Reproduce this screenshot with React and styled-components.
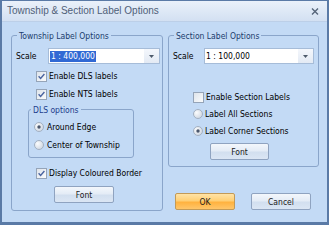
import React from 'react';
import styled, { createGlobalStyle } from 'styled-components';

const BODY_BG = '#c3daf5';

const GlobalStyle = createGlobalStyle`
  html, body { margin: 0; padding: 0; background: ${BODY_BG}; }
  body { font-family: "DejaVu Sans Condensed", "Liberation Sans", Arial, sans-serif; }
  * { box-sizing: border-box; }
`;

const Window = styled.div`
  width: 329px;
  height: 225px;
  border-style: solid;
  border-color: #5a7aa6;
  border-width: 1px 2px 3px 2px;
  background: ${BODY_BG};
  display: flex;
  flex-direction: column;
  font-size: 8.5px;
  color: #000;
  overflow: hidden;
`;

const TitleBar = styled.div`
  height: 21px;
  flex-shrink: 0;
  display: flex;
  align-items: center;
  justify-content: space-between;
  padding: 0 8px 0 5px;
  background: linear-gradient(#eaf1fa, #dce7f5 60%, #d3e0f2);
  border-bottom: 1px solid #bccfe8;
`;

const Title = styled.span`
  font-family: "Liberation Sans", Arial, sans-serif;
  font-size: 10px;
  color: #4f6078;
  line-height: 12px;
`;

const Body = styled.div`
  display: grid;
  grid-template-columns: 152px 151px;
  column-gap: 5px;
  padding: 0 8px 0 9px;
  align-items: start;
`;

const Column = styled.div`
  display: flex;
  flex-direction: column;
`;

const GroupBox = styled.div`
  border: 1px solid #8aa5ca;
  border-radius: 3px;
  display: flex;
  flex-direction: column;
  align-items: flex-start;
  margin: ${p => p.$mt || 0}px 0 0 ${p => p.$ml || 0}px;
  width: ${p => (p.$w ? `${p.$w}px` : 'auto')};
  padding-bottom: ${p => p.$pb}px;
`;

const Legend = styled.div`
  margin: -6px 0 0 ${p => p.$ml}px;
  padding: 0 2px;
  height: 12px;
  line-height: 12px;
  background: ${BODY_BG};
  color: ${p => p.$color || '#203c6c'};
`;

const ScaleRow = styled.div`
  display: flex;
  align-items: center;
  height: 16px;
  margin-top: 6px;
  padding-left: 4px;
`;

const ScaleLabel = styled.span`
  width: ${p => p.$w}px;
`;

const Combo = styled.div`
  width: ${p => p.$w}px;
  height: 16px;
  border: 1px solid #a6bcd8;
  background: #fff;
  display: flex;
  align-items: center;
`;

const ComboText = styled.span`
  flex: 1;
  padding-left: 1px;
  line-height: 11px;
`;

const Selected = styled.span`
  display: inline-block;
  background: #3169d4;
  color: #fff;
  padding: 0 1px;
  line-height: 11px;
`;

const DropButton = styled.div`
  width: 15px;
  height: 100%;
  background: linear-gradient(#f4f7fc, #e3eaf4);
  display: flex;
  align-items: center;
  justify-content: center;
`;

const OptionRow = styled.label`
  display: flex;
  align-items: center;
  gap: ${p => p.$gap || 3}px;
  height: 14px;
  margin: ${p => p.$mt}px 0 0 ${p => p.$ml}px;
  white-space: nowrap;
`;

const Button = styled.div`
  width: ${p => p.$w}px;
  height: 17px;
  margin: ${p => p.$mt || 0}px 0 0 ${p => p.$ml || 0}px;
  border: 1px solid ${p => (p.$primary ? '#c39a57' : '#8fa3c0')};
  border-radius: 2px;
  display: flex;
  align-items: center;
  justify-content: center;
  color: #1b1b1b;
  background: ${p =>
    p.$primary
      ? 'linear-gradient(#ffe3a6 0%, #ffcf75 45%, #ffb23f 55%, #ffc66a 100%)'
      : 'linear-gradient(#f3f7fc 0%, #e4ecf6 45%, #d2dfef 55%, #dbe6f4 100%)'};
`;

const ButtonRow = styled.div`
  display: flex;
  gap: 16px;
  margin-top: 26px;
  padding-left: 7px;
`;

function CheckBox({ checked }) {
  return (
    <svg width="11" height="11" viewBox="0 0 11 11">
      <defs>
        <linearGradient id="cbg" x1="0" y1="0" x2="1" y2="1">
          <stop offset="0" stopColor="#dde3ea" />
          <stop offset="1" stopColor="#fbfcfd" />
        </linearGradient>
      </defs>
      <rect x="0.5" y="0.5" width="10" height="10" fill="url(#cbg)" stroke="#95a4b8" />
      {checked && (
        <path d="M2.6 5.3 L4.6 7.5 L8.4 3" fill="none" stroke="#4a64a0" strokeWidth="1.4" />
      )}
    </svg>
  );
}

function Radio({ checked }) {
  return (
    <svg width="10" height="10" viewBox="0 0 10 10">
      <defs>
        <radialGradient id="rbg" cx="0.35" cy="0.35" r="0.7">
          <stop offset="0" stopColor="#fbfcfd" />
          <stop offset="1" stopColor="#cfd7e2" />
        </radialGradient>
      </defs>
      <circle cx="5" cy="5" r="4.5" fill="url(#rbg)" stroke="#a2b0c2" />
      {checked && <circle cx="5" cy="5" r="1.7" fill="#4a566c" />}
    </svg>
  );
}

function CloseIcon() {
  return (
    <svg width="8" height="7" viewBox="0 0 8 7">
      <path d="M1 0.5 L7 6.5 M7 0.5 L1 6.5" stroke="#56657a" strokeWidth="1.4" />
    </svg>
  );
}

function Arrow() {
  return (
    <svg width="5" height="3" viewBox="0 0 5 3">
      <path d="M0 0 H5 L2.5 3 Z" fill="#4d5a6b" />
    </svg>
  );
}

export default function App() {
  return (
    <>
      <GlobalStyle />
      <Window>
        <TitleBar>
          <Title>Township &amp; Section Label Options</Title>
          <CloseIcon />
        </TitleBar>
        <Body>
          <Column>
            <GroupBox $mt={13} $pb={7}>
              <Legend $ml={5}>Township Label Options</Legend>
              <ScaleRow>
                <ScaleLabel $w={32}>Scale</ScaleLabel>
                <Combo $w={112}>
                  <ComboText>
                    <Selected>1 : 400,000</Selected>
                  </ComboText>
                  <DropButton>
                    <Arrow />
                  </DropButton>
                </Combo>
              </ScaleRow>
              <OptionRow $mt={5} $ml={24} $gap={2}>
                <CheckBox checked />
                Enable DLS labels
              </OptionRow>
              <OptionRow $mt={4} $ml={24} $gap={2}>
                <CheckBox checked />
                Enable NTS labels
              </OptionRow>
              <GroupBox $mt={8} $ml={16} $w={106} $pb={5}>
                <Legend $ml={2} $color="#1d3d8c">DLS options</Legend>
                <OptionRow $mt={4} $ml={5}>
                  <Radio checked />
                  Around Edge
                </OptionRow>
                <OptionRow $mt={4} $ml={5}>
                  <Radio />
                  Center of Township
                </OptionRow>
              </GroupBox>
              <OptionRow $mt={8} $ml={24} $gap={2}>
                <CheckBox checked />
                Display Coloured Border
              </OptionRow>
              <Button $w={60} $mt={6} $ml={42}>Font</Button>
            </GroupBox>
          </Column>
          <Column>
            <GroupBox $mt={13} $pb={6}>
              <Legend $ml={5}>Section Label Options</Legend>
              <ScaleRow>
                <ScaleLabel $w={31}>Scale</ScaleLabel>
                <Combo $w={110}>
                  <ComboText>1 : 100,000</ComboText>
                  <DropButton>
                    <Arrow />
                  </DropButton>
                </Combo>
              </ScaleRow>
              <OptionRow $mt={26} $ml={24} $gap={2}>
                <CheckBox />
                Enable Section Labels
              </OptionRow>
              <OptionRow $mt={3} $ml={24} $gap={2}>
                <Radio />
                Label All Sections
              </OptionRow>
              <OptionRow $mt={3} $ml={24} $gap={2}>
                <Radio checked />
                Label Corner Sections
              </OptionRow>
              <Button $w={59} $mt={5} $ml={41}>Font</Button>
            </GroupBox>
            <ButtonRow>
              <Button $w={60} $primary>OK</Button>
              <Button $w={60}>Cancel</Button>
            </ButtonRow>
          </Column>
        </Body>
      </Window>
    </>
  );
}
